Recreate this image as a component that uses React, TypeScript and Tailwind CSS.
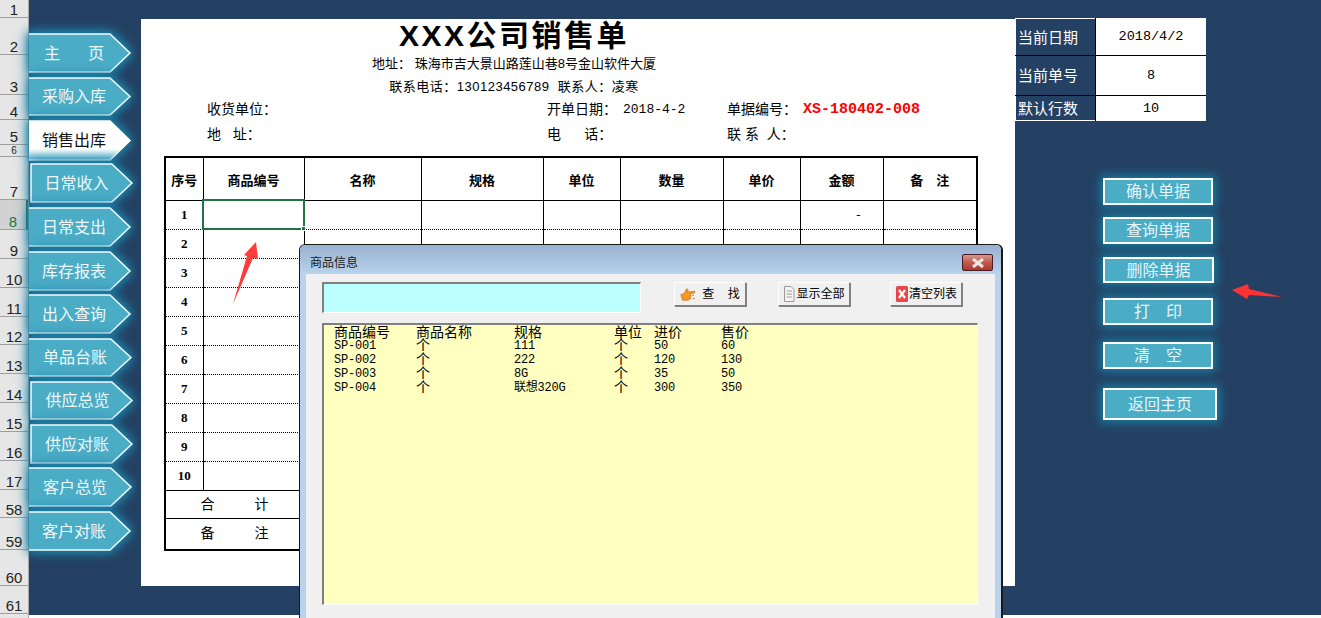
const rowHeads = [
  { label: "1", h: "h-[18px]" },
  { label: "2", h: "h-[37px]" },
  { label: "3", h: "h-[40px]" },
  { label: "4", h: "h-[25px]" },
  { label: "5", h: "h-[25px]" },
  { label: "6", h: "h-[12px]", small: true },
  { label: "7", h: "h-[43px]" },
  { label: "8", h: "h-[30px]", active: true },
  { label: "9", h: "h-[29px]" },
  { label: "10", h: "h-[29px]" },
  { label: "11", h: "h-[29px]" },
  { label: "12", h: "h-[28px]" },
  { label: "13", h: "h-[29px]" },
  { label: "14", h: "h-[29px]" },
  { label: "15", h: "h-[29px]" },
  { label: "16", h: "h-[29px]" },
  { label: "17", h: "h-[29px]" },
  { label: "58", h: "h-[28px]" },
  { label: "59", h: "h-[32px]" },
  { label: "60", h: "h-[36px]" },
  { label: "61", h: "h-[28px]" },
];

const navItems = [
  { label: "主页", box: "mt-[33px] ml-0 h-[40px] w-[103px]", text: "w-[90px] pt-[2px] flex justify-center gap-[28px]", split: true },
  { label: "采购入库", box: "mt-[4px] ml-0 h-[39px] w-[103px]", text: "w-[90px] pt-[1px]" },
  { label: "销售出库", box: "mt-[4px] ml-0 h-[41px] w-[103px]", text: "w-[90px] pt-[1px]", active: true },
  { label: "日常收入", box: "mt-[2px] ml-[1px] h-[40px] w-[104px]", text: "w-[90px] pl-[3px] pt-[1px]", edge: true },
  { label: "日常支出", box: "mt-[4px] ml-0 h-[40px] w-[103px]", text: "w-[90px] pt-[1px]" },
  { label: "库存报表", box: "mt-[4px] ml-0 h-[40px] w-[103px]", text: "w-[90px] pt-[1px]" },
  { label: "出入查询", box: "mt-[3px] ml-0 h-[40px] w-[103px]", text: "w-[90px] pt-[1px]" },
  { label: "单品台账", box: "mt-[4px] ml-0 h-[39px] w-[104px]", text: "w-[92px] pt-[1px]" },
  { label: "供应总览", box: "mt-[4px] ml-[1px] h-[39px] w-[104px]", text: "w-[92px] pl-[3px] pt-[1px]", edge: true },
  { label: "供应对账", box: "mt-[4px] ml-[1px] h-[40px] w-[104px]", text: "w-[92px] pl-[2px] pt-[1px]", edge: true },
  { label: "客户总览", box: "mt-[3px] ml-0 h-[40px] w-[104px]", text: "w-[92px] pt-[1px]" },
  { label: "客户对账", box: "mt-[4px] ml-0 h-[40px] w-[103px]", text: "w-[90px] pt-[1px]" },
];

const headers = ["序号", "商品编号", "名称", "规格", "单位", "数量", "单价", "金额", "备　注"];
const colWidths = [37, 101, 117, 122, 77, 103, 77, 83, 93];

const sideButtons = [
  { label: "确认单据", box: "mt-[57px] h-[27px] w-[110px]" },
  { label: "查询单据", box: "mt-[12px] h-[27px] w-[110px]" },
  { label: "删除单据", box: "mt-[13px] h-[26px] w-[111px]" },
  { label: "打　印", box: "mt-[15px] h-[27px] w-[110px]" },
  { label: "清　空", box: "mt-[17px] h-[27px] w-[110px]" },
  { label: "返回主页", box: "mt-[19px] h-[32px] w-[114px]" },
];

const goods = [
  ["SP-001", "个", "111", "个", "50", "60"],
  ["SP-002", "个", "222", "个", "120", "130"],
  ["SP-003", "个", "8G", "个", "35", "50"],
  ["SP-004", "个", "联想320G", "个", "300", "350"],
];

const NavButton = ({ item }: { item: (typeof navItems)[number] }) => (
  <div className={`relative flex items-center shrink-0 ${item.box}`}>
    <svg
      className="absolute inset-0 w-full h-full [filter:drop-shadow(0_0_4px_#1c82a8)_drop-shadow(0_0_6px_#1c82a8)]"
      viewBox="0 0 103 40"
      preserveAspectRatio="none"
    >
      <defs>
        <linearGradient id="navActive" x1="0" y1="0" x2="0" y2="1">
          <stop offset="0.72" stopColor="#ffffff" />
          <stop offset="1" stopColor="#5fb6cc" />
        </linearGradient>
      </defs>
      <polygon
        points={item.edge ? "1,1 81,1 101,20 81,39 1,39" : "-3,1 81,1 101,20 81,39 -3,39"}
        fill={item.active ? "url(#navActive)" : "#4bacc6"}
        stroke={item.active ? "#ffffff" : "#f2fafc"}
        strokeWidth="1.5"
      />
    </svg>
    <span
      className={`relative text-center text-[16px] leading-none ${item.text} ${
        item.active ? "text-[#111111]" : "text-[#eef9fb]"
      }`}
    >
      {item.split ? (
        <>
          <span>主</span>
          <span>页</span>
        </>
      ) : (
        item.label
      )}
    </span>
  </div>
);

const Bevel = ({ children }: { children: React.ReactNode }) => (
  <button className="flex items-center justify-center w-[72px] h-[24px] bg-[#f0f0f0] border border-t-white border-l-white border-r-[#808080] border-b-[#808080] shadow-[1px_1px_0_#808080] text-[12px] leading-none text-black">
    {children}
  </button>
);

const App = () => {
  return (
    <div className="relative w-full h-[618px] overflow-hidden bg-white flex font-['Liberation_Sans','Noto_Sans_CJK_SC',sans-serif]">
      {/* Excel row numbers */}
      <div className="w-[29px] shrink-0 bg-[#e6e6e6] flex flex-col border-r border-[#a8a8a8] h-[618px]">
        {rowHeads.map((r) => (
          <div
            key={r.label}
            className={`${r.h} shrink-0 flex items-end justify-center overflow-hidden border-b border-[#9e9e9e] ${
              r.small ? "text-[10px] leading-[10px]" : "text-[15px] leading-[15px]"
            } ${r.active ? "bg-[#d2d2d2] text-[#217346] border-r-2 border-r-[#217346]" : "text-[#222222]"}`}
          >
            {r.label}
          </div>
        ))}
      </div>

      <div className="flex h-[615px] grow bg-[#244062]">
        <div className="w-[112px] shrink-0 flex flex-col">
          {navItems.map((item) => (
            <NavButton key={item.label} item={item} />
          ))}
        </div>

        {/* Sales sheet */}
        <div className="w-[874px] h-[567px] mt-[19px] bg-white shrink-0 text-black">
          <div className="h-[33px] flex items-center justify-center pr-[128px] text-[30px] leading-none font-bold tracking-[2.5px]">
            XXX公司销售单
          </div>
          <div className="h-[23px] flex items-center justify-center pr-[128px] text-[13px] leading-none">
            地址： 珠海市吉大景山路莲山巷8号金山软件大厦
          </div>
          <div className="h-[22px] flex items-center justify-center pr-[128px] text-[13px] leading-none tracking-[0.5px]">
            联系电话：130123456789&nbsp;&nbsp;联系人：凌寒
          </div>
          <div className="h-[24px] pl-[66px] grid grid-cols-[340px_180px_1fr] items-center text-[14px] leading-none">
            <span>收货单位：</span>
            <span className="flex items-center">
              <span className="w-[76px]">开单日期：</span>
              <span className="font-['Liberation_Mono'] text-[13px]">2018-4-2</span>
            </span>
            <span className="flex items-center">
              <span className="w-[76px]">单据编号：</span>
              <span className="font-['Liberation_Mono'] font-bold text-[#ff0000] text-[15px]">XS-180402-008</span>
            </span>
          </div>
          <div className="h-[25px] pl-[66px] grid grid-cols-[340px_180px_1fr] items-center text-[14px] leading-none">
            <span>地&nbsp;&nbsp;&nbsp;址：</span>
            <span>电&nbsp;&nbsp;&nbsp;&nbsp;&nbsp;&nbsp;话：</span>
            <span>联&nbsp;系&nbsp;&nbsp;人：</span>
          </div>
          <div className="ml-[23px] mt-[10px] w-[814px] h-[395px] border-2 border-black relative">
            <table className="table-fixed border-collapse w-[810px] text-[13px]">
              <colgroup>
                {colWidths.map((w, i) => (
                  <col key={i} style={{ width: w }} />
                ))}
              </colgroup>
              <thead>
                <tr className="h-[42px]">
                  {headers.map((h, i) => (
                    <th
                      key={h}
                      className={`font-bold text-center p-0 pt-[3px] border-black border-b ${
                        i < headers.length - 1 ? "border-r" : ""
                      }`}
                    >
                      {h}
                    </th>
                  ))}
                </tr>
              </thead>
              <tbody>
                {[1, 2, 3, 4, 5, 6, 7, 8, 9, 10].map((n) => (
                  <tr key={n} className="h-[29px]">
                    {headers.map((h, i) => (
                      <td
                        key={h}
                        className={`p-0 pt-[1px] text-center font-bold font-['Liberation_Serif'] text-[13px] border-black border-b ${
                          n === 10 ? "" : "[border-bottom-style:dotted]"
                        } ${i < headers.length - 1 ? "border-r" : ""}`}
                      >
                        {i === 0 ? n : i === 7 && n === 1 ? <span className="pl-[34px] font-normal">-</span> : ""}
                      </td>
                    ))}
                  </tr>
                ))}
                <tr className="h-[28px]">
                  <td colSpan={9} className="p-0 border-b border-black text-[14px]">
                    <span className="flex w-[137px] justify-center gap-[40px]">
                      <span>合</span>
                      <span>计</span>
                    </span>
                  </td>
                </tr>
                <tr className="h-[31px]">
                  <td colSpan={9} className="p-0 text-[14px]">
                    <span className="flex w-[137px] justify-center gap-[40px]">
                      <span>备</span>
                      <span>注</span>
                    </span>
                  </td>
                </tr>
              </tbody>
            </table>
            {/* selected cell */}
            <div className="absolute left-[36px] top-[41px] w-[103px] h-[31px] border-2 border-[#217346]">
              <div className="absolute -right-[3px] -bottom-[3px] w-[5px] h-[5px] bg-[#217346] border border-white" />
            </div>
          </div>
        </div>

        {/* Right panel */}
        <div className="grow flex flex-col">
          <div className="mt-[18px] w-[191px] h-[103px] flex flex-col text-[15px] leading-none">
            <div className="h-[38px] flex border-b border-black">
              <div className="w-[80px] flex items-center pl-[2px] text-white border-l border-t border-white">当前日期</div>
              <div className="grow flex items-center justify-center bg-white text-black border-l border-black font-['Liberation_Mono'] text-[13.5px]">2018/4/2</div>
            </div>
            <div className="h-[40px] flex border-b border-black">
              <div className="w-[80px] flex items-center pl-[2px] text-white border-l border-white">当前单号</div>
              <div className="grow flex items-center justify-center bg-white text-black border-l border-black font-['Liberation_Mono'] text-[13.5px]">8</div>
            </div>
            <div className="h-[25px] flex">
              <div className="w-[80px] flex items-center pl-[2px] text-white border-l border-b border-white">默认行数</div>
              <div className="grow flex items-center justify-center bg-white text-black border-l border-black font-['Liberation_Mono'] text-[13.5px]">10</div>
            </div>
          </div>
          <div className="pl-[88px] flex flex-col">
            {sideButtons.map((b) => (
              <div
                key={b.label}
                className={`${b.box} shrink-0 flex items-center justify-center pt-[1px] bg-[#4bacc6] border-2 border-white text-[16px] leading-none text-[#e6f6f9] shadow-[0_0_9px_3px_#1a7a9f]`}
              >
                {b.label}
              </div>
            ))}
          </div>
        </div>
      </div>

      {/* Red annotation arrows */}
      <svg className="absolute left-[225px] top-[236px] w-[40px] h-[72px]" viewBox="225 236 40 72">
        <polygon points="233,304 247,256 244,255 256,242 258,259 253,258" fill="#ff3b3b" />
      </svg>
      <svg className="absolute left-[1228px] top-[280px] w-[58px] h-[24px]" viewBox="1228 280 58 24">
        <polygon points="1232,290 1248,284 1249,289 1282,297 1249,295 1247,299" fill="#ff3333" />
      </svg>

      {/* Goods dialog */}
      <div className="absolute left-[299px] top-[244px] w-[704px] h-[400px] rounded-t-[6px] border-l border-t border-r-2 border-[#1a1a1a] bg-[#b9d3ec] flex flex-col">
        <div className="h-[29px] shrink-0 relative rounded-t-[5px] bg-gradient-to-b from-[#97b1d0] to-[#b9d3ec] flex items-center pl-[10px] pt-[6px] text-[12px] leading-none text-[#1a1a1a]">
          商品信息
          <div className="absolute right-[8px] top-[9px] w-[31px] h-[17px] rounded-[2px] border border-[#4a1a22] bg-gradient-to-b from-[#d9968c] via-[#c25a4c] to-[#a8392e] flex items-center justify-center">
            <svg width="14" height="10" viewBox="0 0 14 10">
              <path d="M2 1 L12 9 M12 1 L2 9" stroke="#e8e8e8" strokeWidth="3" />
            </svg>
          </div>
        </div>
        <div className="mx-[6px] w-[689px] grow bg-[#f0f0f0] pl-[16px] pt-[8px]">
          <div className="flex">
            <div className="w-[319px] h-[31px] bg-[#bbffff] border border-t-2 border-l-2 border-t-[#808080] border-l-[#808080] border-r-white border-b-white" />
            <div className="ml-[33px] mr-[32px]">
              <Bevel>
                <svg width="18" height="17" viewBox="0 0 22 18" className="mr-[4px]">
                  <path d="M1 9 L5 8 L8 2 L10 3 L9 6 L18 5 L18 7 L13 8 L13 14 L10 16 L3 16 Z" fill="#f59a23" stroke="#c96a10" strokeWidth="0.8" />
                  <path d="M15 10 h2 M16 14 h2" stroke="#b06a20" strokeWidth="1.2" />
                </svg>
                查&nbsp;&nbsp;&nbsp;&nbsp;找
              </Bevel>
            </div>
            <div className="mr-[40px]">
              <Bevel>
                <svg width="12" height="18" viewBox="0 0 12 18" className="mr-[1px]">
                  <path d="M1.5 1.5 H8 L11 4.5 V16.5 H1.5 Z" fill="#f4f4f4" stroke="#9a9a9a" />
                  <path d="M3.5 6 H9 M3.5 9 H9 M3.5 12 H9" stroke="#a0a0a0" />
                </svg>
                显示全部
              </Bevel>
            </div>
            <Bevel>
              <svg width="14" height="18" viewBox="0 0 14 18">
                <rect x="1" y="1" width="12" height="16" rx="1.5" fill="#e4474c" />
                <path d="M4 5 L10 13 M10 5 L4 13" stroke="#ffffff" strokeWidth="2.2" />
              </svg>
              清空列表
            </Bevel>
          </div>
          <div className="mt-[10px] w-[656px] h-[282px] pt-[1px] bg-[#ffffc0] border border-t-2 border-l-2 border-t-[#808080] border-l-[#808080] border-r-white border-b-white pl-[10px] text-black">
            <div className="grid grid-cols-[82px_98px_100px_40px_67px_60px] h-[13px] items-center text-[14px] leading-[13px]">
              <span>商品编号</span>
              <span>商品名称</span>
              <span>规格</span>
              <span>单位</span>
              <span>进价</span>
              <span>售价</span>
            </div>
            {goods.map((g) => (
              <div
                key={g[0]}
                className="grid grid-cols-[82px_98px_100px_40px_67px_60px] h-[14px] items-center text-[12px] tracking-[-0.2px] leading-[14px] font-['Liberation_Mono','Noto_Sans_CJK_SC']"
              >
                {g.map((v, i) => (
                  <span key={i} className={i === 1 || i === 3 ? "text-[14px]" : ""}>
                    {v}
                  </span>
                ))}
              </div>
            ))}
          </div>
        </div>
      </div>
    </div>
  );
};

export default App;
